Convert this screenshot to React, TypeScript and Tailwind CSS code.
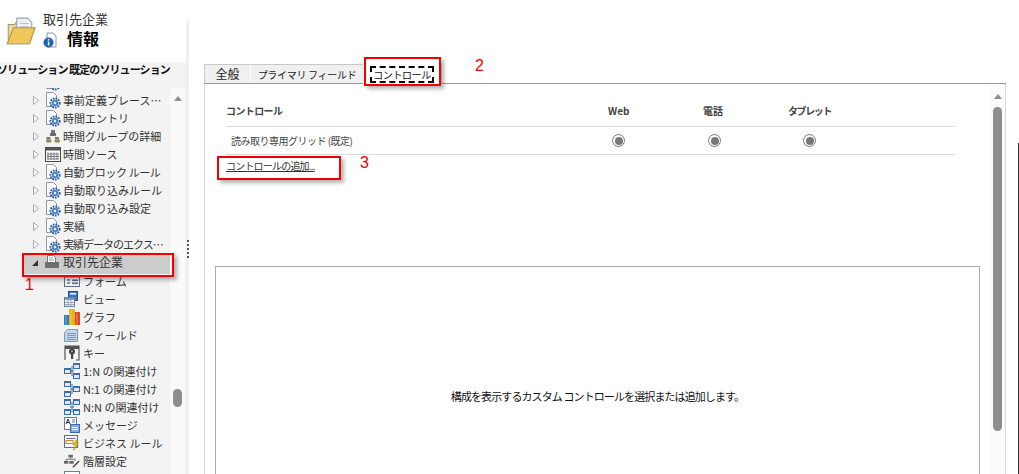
const jp = "font-['Noto_Sans_CJK_JP','Liberation_Sans',sans-serif]";

function Gear({ x = 8, y = 9 }: { x?: number; y?: number }) {
  return (
    <g>
      <circle cx={x} cy={y} r="4.6" fill="none" stroke="#2f5f9e" strokeWidth="2" strokeDasharray="1.7 1" />
      <circle cx={x} cy={y} r="3.2" fill="#4f86c6" />
      <circle cx={x} cy={y} r="1.2" fill="#fff" />
    </g>
  );
}

function PageGear() {
  return (
    <svg width="16" height="18" viewBox="0 0 16 18">
      <path d="M1.5 1.5h7l3 3v5h-3v6h-7z" fill="#fff" stroke="#8a97a8" />
      <Gear x={10} y={12} />
    </svg>
  );
}

function PeopleIcon() {
  return (
    <svg width="16" height="18" viewBox="0 0 16 18">
      <rect x="6" y="3" width="4" height="3" fill="#777" />
      <rect x="5" y="6" width="6" height="3" rx="1" fill="#666" />
      <rect x="1.5" y="10" width="4" height="2.5" fill="#777" />
      <rect x="1" y="12.5" width="5.5" height="3" rx="1" fill="#8b8f5a" />
      <rect x="10" y="10" width="4" height="2.5" fill="#777" />
      <rect x="9.5" y="12.5" width="5.5" height="3" rx="1" fill="#8b8f5a" />
    </svg>
  );
}

function CalendarIcon() {
  return (
    <svg width="16" height="16" viewBox="0 0 16 16">
      <rect x="0.5" y="1.5" width="15" height="14" fill="#fff" stroke="#444" />
      <rect x="0.5" y="1.5" width="15" height="3" fill="#555" />
      <path d="M3 6.5v7M6 6.5v7M9 6.5v7M12 6.5v7M2 8h12M2 10.5h12M2 13h12" stroke="#777" strokeWidth="1" />
    </svg>
  );
}

function EntityIcon() {
  return (
    <svg width="16" height="16" viewBox="0 0 16 16">
      <path d="M3.5 1.5h6l2 2v5h-8z" fill="#fff" stroke="#777" />
      <path d="M5 4h4M5 6h5" stroke="#999" />
      <path d="M1 8h14v6H1z" fill="#6f6f6f" />
    </svg>
  );
}

function FormIcon() {
  return (
    <svg width="16" height="14" viewBox="0 0 16 14">
      <rect x="0.5" y="1.5" width="15" height="11" fill="#eef2f7" stroke="#5c6f8c" />
      <rect x="1" y="2" width="14" height="2" fill="#a9bdd8" />
      <path d="M3 6h3M3 9h3" stroke="#333" />
      <rect x="8" y="5.5" width="6" height="1.6" fill="#5c6f8c" />
      <rect x="8" y="8.5" width="6" height="1.6" fill="#5c6f8c" />
    </svg>
  );
}

function ViewIcon() {
  return (
    <svg width="16" height="16" viewBox="0 0 16 16">
      <rect x="4.5" y="0.5" width="9" height="9" fill="#3f74c4" stroke="#27508f" />
      <rect x="6" y="2" width="6" height="1.5" fill="#fff" />
      <rect x="0.5" y="6.5" width="10" height="9" fill="#f2f5f9" stroke="#6d7f99" />
      <rect x="1" y="7" width="9" height="2" fill="#7d9ac4" />
      <path d="M1 11.5h9M1 13.5h9M4 9v6M7 9v6" stroke="#9aa8bb" />
    </svg>
  );
}

function ChartIcon() {
  return (
    <svg width="16" height="16" viewBox="0 0 16 16">
      <rect x="0" y="6" width="5" height="10" fill="#2f7fc4" />
      <rect x="5" y="0" width="6" height="16" fill="#e3b21d" />
      <rect x="11" y="3" width="5" height="13" fill="#dc4a24" />
      <path d="M7 1v15M13 4v12M2 7v9" stroke="#fff" strokeOpacity="0.35" />
    </svg>
  );
}

function FieldIcon() {
  return (
    <svg width="14" height="13" viewBox="0 0 14 13">
      <path d="M3.5 0.5h10v12H0.5V3.5z" fill="#c5d5ea" stroke="#7f97b8" />
      <path d="M3 4.5h9M3 6.5h9M3 8.5h9M3 10.5h9" stroke="#7f97b8" />
    </svg>
  );
}

function KeyIcon() {
  return (
    <svg width="16" height="16" viewBox="0 0 16 16">
      <path d="M1 15V1h14v14h-3" fill="none" stroke="#555" strokeWidth="1.2" />
      <rect x="1" y="1" width="14" height="3" fill="#555" />
      <circle cx="8" cy="6.5" r="3" fill="#444" />
      <rect x="7" y="8" width="2.2" height="6" fill="#444" />
      <rect x="7.5" y="5.5" width="1" height="1.6" fill="#fff" />
    </svg>
  );
}

function Tbl({ x, y }: { x: number; y: number }) {
  return (
    <g>
      <rect x={x} y={y} width="6" height="5" fill="#dfe8f4" stroke="#3a6cb0" strokeWidth="1" />
      <rect x={x} y={y} width="6" height="1.5" fill="#3a6cb0" />
    </g>
  );
}

function RelIcon({ kind }: { kind: '1n' | 'n1' | 'nn' }) {
  return (
    <svg width="16" height="16" viewBox="0 0 16 16">
      <path d="M6 8h4M8 3v10" stroke="#3a6cb0" fill="none" />
      {kind === '1n' && (
        <>
          <Tbl x={0.5} y={5.5} />
          <Tbl x={9.5} y={0.5} />
          <Tbl x={9.5} y={10.5} />
        </>
      )}
      {kind === 'n1' && (
        <>
          <Tbl x={0.5} y={0.5} />
          <Tbl x={0.5} y={10.5} />
          <Tbl x={9.5} y={5.5} />
        </>
      )}
      {kind === 'nn' && (
        <>
          <Tbl x={0.5} y={0.5} />
          <Tbl x={0.5} y={10.5} />
          <Tbl x={9.5} y={0.5} />
          <Tbl x={9.5} y={10.5} />
        </>
      )}
    </svg>
  );
}

function MessageIcon() {
  return (
    <svg width="16" height="16" viewBox="0 0 16 16">
      <rect x="0.5" y="0.5" width="12" height="12" fill="#fff" stroke="#6d7f99" />
      <path d="M2 7l2-5 2 5M3 5.5h2" stroke="#333" fill="none" />
      <path d="M8 3h3M8 5h3" stroke="#6d7f99" />
      <rect x="6.5" y="7.5" width="9" height="8" fill="#8aa7d0" stroke="#3a6cb0" />
      <path d="M8 10.5h6M8 12.5h6" stroke="#fff" />
    </svg>
  );
}

function RuleIcon() {
  return (
    <svg width="16" height="16" viewBox="0 0 16 16">
      <rect x="0.5" y="0.5" width="13" height="12" fill="#f4f6f9" stroke="#5c6f8c" />
      <path d="M2.5 3.5h9" stroke="#5c6f8c" />
      <rect x="2" y="5.5" width="7" height="3" fill="none" stroke="#d98a1c" />
      <path d="M12 5l-3 5h2.5L9.5 15.5l5-7H12l1.5-3.500z" fill="#f0c419" stroke="#a87a10" strokeWidth="0.5" />
    </svg>
  );
}

function HierarchyIcon() {
  return (
    <svg width="18" height="16" viewBox="0 0 18 16">
      <rect x="5" y="1" width="5" height="3" fill="#666" />
      <path d="M7.500 4v2M2.500 8V6h10v2" stroke="#666" fill="none" />
      <rect x="0" y="8" width="5" height="3" fill="#666" />
      <rect x="6" y="8" width="5" height="3" fill="#666" />
      <path d="M17 8l-7 7" stroke="#444" strokeWidth="1.600" />
    </svg>
  );
}

function DashIcon() {
  return (
    <svg width="16" height="16" viewBox="0 0 16 16">
      <rect x="0.5" y="0.5" width="15" height="14" fill="#fff" stroke="#6d7f99" />
    </svg>
  );
}

function Expander({ open }: { open?: boolean }) {
  return (
    <svg width="6" height="9" viewBox="0 0 6 9" className="shrink-0">
      {open ? <path d="M6 2v6H0z" fill="#333" /> : <path d="M0.500 0.500l5 4-5 4z" fill="#fff" stroke="#a8a8a8" />}
    </svg>
  );
}

type TopItem = { label: string; icon: React.ReactNode; cls?: string };

const topItems: TopItem[] = [
  { label: '', icon: <PageGear /> },
  { label: '事前定義プレース…', icon: <PageGear /> },
  { label: '時間エントリ', icon: <PageGear /> },
  { label: '時間グループの詳細', icon: <PeopleIcon /> },
  { label: '時間ソース', icon: <CalendarIcon /> },
  { label: '自動ブロック ルール', icon: <PageGear />, cls: 'tracking-[-0.4px]' },
  { label: '自動取り込みルール', icon: <PageGear /> },
  { label: '自動取り込み設定', icon: <PageGear /> },
  { label: '実績', icon: <PageGear /> },
  { label: '実績データのエクス…', icon: <PageGear />, cls: 'tracking-[-1px]' },
];

const subItems: TopItem[] = [
  { label: 'フォーム', icon: <FormIcon /> },
  { label: 'ビュー', icon: <ViewIcon /> },
  { label: 'グラフ', icon: <ChartIcon /> },
  { label: 'フィールド', icon: <FieldIcon /> },
  { label: 'キー', icon: <KeyIcon /> },
  { label: '1:N の関連付け', icon: <RelIcon kind="1n" /> },
  { label: 'N:1 の関連付け', icon: <RelIcon kind="n1" /> },
  { label: 'N:N の関連付け', icon: <RelIcon kind="nn" /> },
  { label: 'メッセージ', icon: <MessageIcon /> },
  { label: 'ビジネス ルール', icon: <RuleIcon /> },
  { label: '階層設定', icon: <HierarchyIcon /> },
  { label: 'ダッシュボード', icon: <DashIcon /> },
];

function Radio() {
  return (
    <span className="flex w-[13px] h-[13px] rounded-full border border-[#777] items-center justify-center">
      <span className="w-[8px] h-[8px] rounded-full bg-[#777]" />
    </span>
  );
}

function Sidebar() {
  return (
    <aside className="w-[186px] shrink-0 flex flex-col bg-[#f3f3f3] overflow-hidden">
      <div className="h-[62px] shrink-0 bg-white relative flex">
        <svg width="34" height="32" viewBox="0 0 30 30" className="ml-[3px] mt-[16px]">
          <path d="M4 8h6l2-3h8v18H4z" fill="#e2d9a8" stroke="#a89a60" />
          <path d="M12 2h10l4 4v12H12z" fill="#eef1f4" stroke="#9aa4b0" />
          <path d="M15 7h8M15 10h8M15 13h8" stroke="#b6bfc9" />
          <path d="M9 11h20l-5 15H3z" fill="#f0c85a" stroke="#b2913c" />
          <path d="M3 26l-2 1h22l1-1z" fill="#cfcfcf" />
        </svg>
        <div className="ml-[6px] pt-[10px]">
          <div className={`${jp} text-[13px] leading-[18px] text-[#333]`}>取引先企業</div>
          <div className="flex items-center">
            <svg width="14" height="16" viewBox="0 0 14 16" className="mt-[4px]">
              <path d="M4 1h6l3 3v11H4z" fill="#fff" stroke="#8a97a8" />
              <circle cx="5.500" cy="10.500" r="5" fill="#1f63ad" />
              <rect x="4.800" y="9.500" width="1.500" height="4" fill="#fff" />
              <rect x="4.800" y="7" width="1.500" height="1.500" fill="#fff" />
            </svg>
            <span className={`${jp} ml-[10px] text-[16px] leading-[20px] font-bold text-black`}>情報</span>
          </div>
        </div>
      </div>
      <div className={`${jp} h-[26px] shrink-0 -ml-[3px] pt-[1px] text-[11px] leading-[12px] font-bold text-[#111] whitespace-nowrap flex items-start`}>
        <span className="tracking-[-0.9px]">ソリューション 既定のソリューション</span>
      </div>
      <div className="flex-1 flex min-h-0">
        <div className="w-[170px] overflow-hidden">
          <div className="-mt-[15px]">
            {topItems.map((item, i) => (
              <div key={i} className="h-[18px] flex items-center pl-[33px]">
                <Expander />
                <span className="ml-[6px] w-[16px] shrink-0 flex">{item.icon}</span>
                <span className={`${jp} ml-[2px] text-[11px] text-[#333] whitespace-nowrap ${item.cls ?? ''}`}>{item.label}</span>
              </div>
            ))}
            <div className="h-[21px] -mb-[2px] ml-[24px] w-[147px] bg-[#cccccc] flex items-center pl-[8px] pb-[3px]">
              <Expander open />
              <span className="ml-[6px] w-[16px] shrink-0 flex">
                <EntityIcon />
              </span>
              <span className={`${jp} ml-[3px] text-[12px] text-[#333] whitespace-nowrap`}>取引先企業</span>
            </div>
            {subItems.map((item) => (
              <div key={item.label} className="h-[18px] flex items-center pl-[64px]">
                <span className="w-[16px] shrink-0 flex">{item.icon}</span>
                <span className={`${jp} ml-[3px] text-[11px] text-[#333] whitespace-nowrap`}>{item.label}</span>
              </div>
            ))}
          </div>
        </div>
        <div className="w-[15px] bg-[#fafafa] flex flex-col items-center pt-[8px]">
          <span className="w-0 h-0 border-l-[4px] border-r-[4px] border-b-[5px] border-l-transparent border-r-transparent border-b-[#8e8e8e]" />
          <span className="w-[9px] h-[18px] rounded-[5px] bg-[#8e8e8e] mt-[288px]" />
        </div>
      </div>
    </aside>
  );
}

function Splitter() {
  return (
    <div className="w-[3px] shrink-0 mt-[20px] bg-[#f0f0f0] flex flex-col items-center pt-[220px] gap-[2px]">
      {[0, 1, 2, 3, 4].map((i) => (
        <span key={i} className="w-[2px] h-[2px] bg-[#555]" />
      ))}
    </div>
  );
}

function Main() {
  return (
    <main className="flex-1 min-w-0 pl-[15px] pr-[12px] pt-[64px] flex flex-col">
      <div className={`${jp} h-[20px] shrink-0 flex border-b border-[#999] text-[#222] whitespace-nowrap`}>
        <div className="w-[46px] h-[19px] bg-[#f0f0f0] border-l border-t border-[#c8c8c8] flex items-center justify-center text-[12px]">全般</div>
        <div className="w-[112px] h-[19px] ml-px bg-[#f0f0f0] border-t border-[#c8c8c8] flex items-center justify-center text-[10px] tracking-[-0.3px]">プライマリ フィールド</div>
        <div className="w-[79px] h-[20px] bg-white flex items-center justify-center border-r border-[#ddd]">
          <span className="border-2 border-dashed border-black text-[10px] leading-[13px] px-px text-[#111] tracking-[-0.4px]">コントロール</span>
        </div>
      </div>
      <div className="flex-1 min-h-0 flex border-l border-r border-[#d8d8d8]">
        <div className="flex-1 min-w-0 pl-[10px] pr-[10px] flex flex-col">
          <div className="pl-[11px] pr-[25px] pt-[19px]">
            <div className={`${jp} h-[24px] flex items-start border-b border-[#dcdcdc] text-[10px] leading-[16px] font-bold text-[#444]`}>
              <span className="w-[382px] tracking-[-0.6px]">コントロール</span>
              <span className="w-[95px]">Web</span>
              <span className="w-[85px]">電話</span>
              <span className="tracking-[-1.400px]">タブレット</span>
            </div>
            <div className={`${jp} h-[28px] flex items-center border-b border-[#dcdcdc] text-[10px] text-[#444]`}>
              <span className="w-[386px] pl-[5px] tracking-[-0.5px]">読み取り専用グリッド (既定)</span>
              <span className="w-[96px]">
                <Radio />
              </span>
              <span className="w-[95px]">
                <Radio />
              </span>
              <Radio />
            </div>
            <div className={`${jp} h-[24px] pt-[3px] text-[10px] leading-[16px] text-[#333] underline tracking-[-0.8px]`}>コントロールの追加...</div>
          </div>
          <div className="mt-[87px] flex-1 border border-[#aaaaaa] border-b-0 flex items-start justify-center">
            <span className={`${jp} mt-[120px] text-[11px] leading-[18px] text-[#111] tracking-[-0.9px]`}>構成を表示するカスタム コントロールを選択または追加します。</span>
          </div>
        </div>
        <div className="w-[15px] shrink-0 bg-[#fbfbfb] flex flex-col items-center pt-[10px]">
          <span className="w-0 h-0 border-l-[4px] border-r-[4px] border-b-[5px] border-l-transparent border-r-transparent border-b-[#8e8e8e]" />
          <span className="w-[9px] h-[324px] mt-[8px] rounded-[5px] bg-[#8e8e8e]" />
        </div>
      </div>
    </main>
  );
}

export default function App() {
  return (
    <div className="relative w-[1019px] h-[474px] overflow-hidden bg-white flex">
      <Sidebar />
      <Splitter />
      <Main />
      <div className="w-px shrink-0 mt-[143px] bg-[#333]" />

      {/* 注釈 */}
      <div className="absolute left-[22px] top-[253px] w-[152px] h-[24px] border-2 border-[#f00000] shadow-[3px_3px_4px_rgba(0,0,0,0.3)]" />
      <div className="absolute left-[364px] top-[57px] w-[77px] h-[29px] border-2 border-[#f00000] shadow-[3px_3px_4px_rgba(0,0,0,0.3)]" />
      <div className="absolute left-[217px] top-[156px] w-[124px] h-[24px] border-2 border-[#f00000] shadow-[3px_3px_4px_rgba(0,0,0,0.3)]" />
      <span className="absolute left-[25px] top-[276px] font-['Liberation_Sans',sans-serif] text-[16px] leading-[18px] text-[#f00000]">1</span>
      <span className="absolute left-[475px] top-[57px] font-['Liberation_Sans',sans-serif] text-[16px] leading-[18px] text-[#f00000]">2</span>
      <span className="absolute left-[360px] top-[154px] font-['Liberation_Sans',sans-serif] text-[16px] leading-[18px] text-[#f00000]">3</span>
    </div>
  );
}
